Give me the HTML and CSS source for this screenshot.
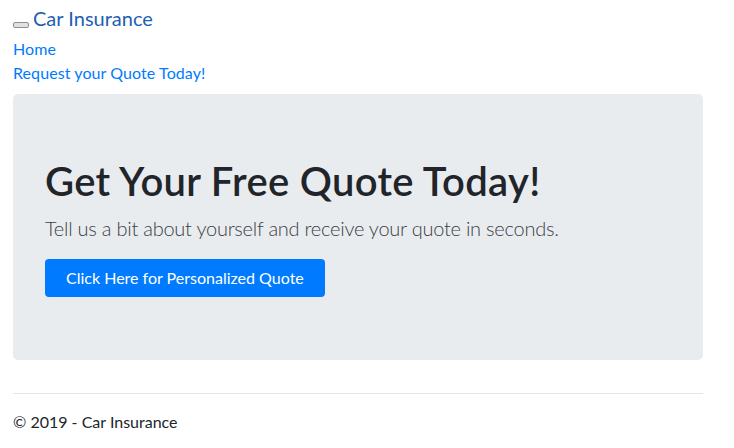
FILE: index.html
```html
<!DOCTYPE html>
<html lang="en">
<head>
<meta charset="utf-8">
<title>Car Insurance</title>
<link rel="stylesheet" href="styles.css">
</head>
<body>
<header class="site-nav">
  <div class="brand-row">
    <button class="toggler" type="button"></button>
    <a class="brand" href="#">Car Insurance</a>
  </div>
  <ul class="nav-links">
    <li><a href="#">Home</a></li>
    <li><a href="#">Request your Quote Today!</a></li>
  </ul>
</header>
<main class="page">
  <section class="jumbotron">
    <h1 class="jumbo-title">Get Your Free Quote Today!</h1>
    <p class="lead">Tell us a bit about yourself and receive your quote in seconds.</p>
    <a class="btn-primary" href="#">Click Here for Personalized Quote</a>
  </section>
  <hr class="divider">
  <footer class="footer">
    <p>&copy; 2019 - Car Insurance</p>
  </footer>
</main>
</body>
</html>
```
FILE: styles.css
```css
* { box-sizing: border-box; }
body {
  margin: 0;
  font-family: "Segoe UI", Lato, "Liberation Sans", sans-serif;
  font-size: 16px;
  line-height: 1.5;
  color: #212529;
  background: #fff;
}
a { text-decoration: none; }
.site-nav {
  padding: 3px 13px 0;
}
.brand-row {
  display: flex;
  align-items: center;
  height: 30px;
}
.toggler {
  width: 16px;
  height: 6px;
  margin: 13px 4px 0 0;
  padding: 0;
  background: #e1e1e1;
  border: 1px solid #8f8f8f;
  border-radius: 2px;
}
.brand {
  font-size: 20px;
  line-height: 30px;
  color: #1e5fb4;
}
.nav-links {
  list-style: none;
  margin: 4px 0 0;
  padding: 0;
}
.nav-links a {
  display: block;
  color: #007bff;
  line-height: 24px;
  letter-spacing: 0.08px;
}
.page {
  padding: 0 31px 0 13px;
}
.jumbotron {
  margin-top: 9px;
  background: #e9ecef;
  border-radius: 5px;
  padding: 63px 32px;
  height: 266px;
}
.jumbo-title {
  margin: 0 0 8px;
  font-size: 40px;
  font-weight: 600;
  line-height: 48px;
  letter-spacing: 0.3px;
}
.lead {
  margin: 0 0 16px;
  font-size: 20px;
  font-weight: 300;
  line-height: 30px;
  color: #3b4046;
  letter-spacing: -0.24px;
}
.btn-primary {
  display: inline-block;
  height: 38px;
  line-height: 38px;
  padding: 0 21px;
  background: #007bff;
  color: #fff;
  border-radius: 4px;
  font-size: 16px;
}
.divider {
  margin: 33px 0 0;
  border: 0;
  border-top: 1px solid #e5e5e5;
}
.footer p {
  margin: 16px 0 0;
  line-height: 24px;
}
```
